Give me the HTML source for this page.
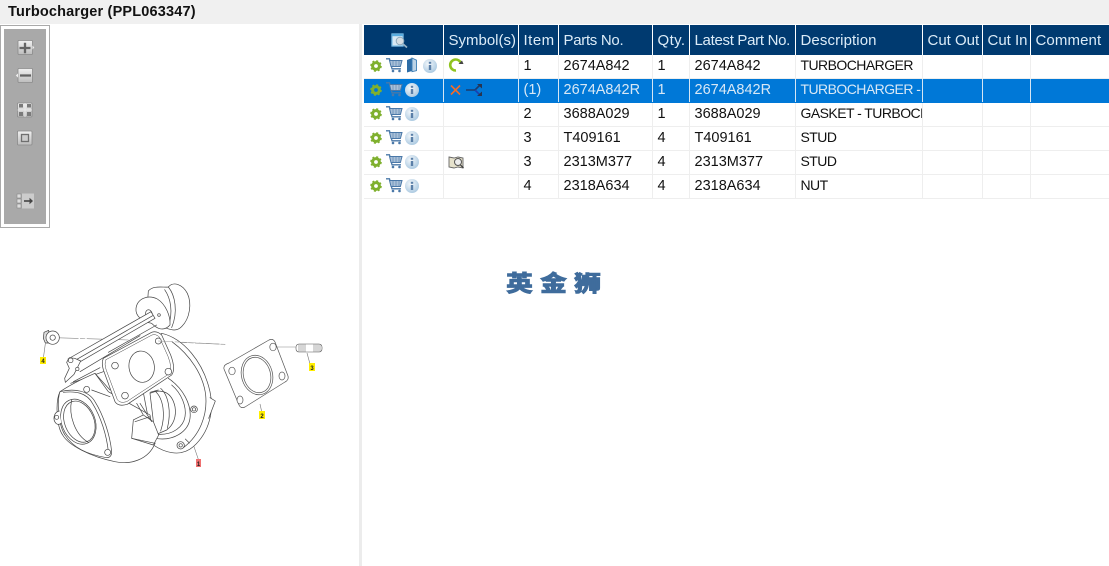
<!DOCTYPE html>
<html><head><meta charset="utf-8"><style>
html,body{margin:0;padding:0;width:1109px;height:566px;overflow:hidden;background:#fff;font-family:"Liberation Sans","Noto Sans CJK SC",sans-serif;color:#111}
#top{position:absolute;left:0;top:0;width:1109px;height:24px;background:#f0f0f0;font-weight:bold;font-size:14.5px;line-height:24px;padding-left:8px;box-sizing:border-box;letter-spacing:.18px}
#bar{position:absolute;left:0;top:25px;width:48px;height:201px;border:1px solid #aaa;background:#fff}
#bar i{position:absolute;left:3px;top:3px;width:42px;height:195px;background:#a9a9a9}
#split{position:absolute;left:359px;top:24px;width:3px;height:542px;background:#ececec}
table{position:absolute;left:364px;top:25px;border-collapse:collapse;table-layout:fixed;width:745px;font-size:14.5px}
td,th{padding:0 0 0 5px;overflow:hidden;white-space:nowrap;border-right:1px solid #eee;border-bottom:1px solid #eee;height:23px;line-height:22px;box-sizing:content-box;text-align:left;font-weight:normal;vertical-align:top}
th{background:#003a70;color:#dcecf8;height:28px;padding-top:2px;line-height:28px;font-size:15px;border-right:1px solid #fff;border-bottom:0;padding-left:5px}
tr.s td{background:#0078d7;color:#d8e8f6;border-right-color:#d5e6f4;border-bottom-color:#0078d7}
td.u{font-size:14px;letter-spacing:-.55px;line-height:20px}
#logo{position:absolute;left:506px;top:267px;font-size:27px;font-weight:900;letter-spacing:7px;line-height:34px;color:#3f6c9c;white-space:nowrap;transform:scaleY(.84);transform-origin:0 50%;-webkit-text-stroke:.7px #3f6c9c;font-family:"Liberation Sans","Noto Sans CJK SC",sans-serif}
svg{position:absolute;left:0;top:0}
.lb{font-size:6px;font-weight:bold;fill:#222;text-anchor:middle}
</style></head><body>
<div id="top">Turbocharger (PPL063347)</div>
<div id="bar"><i></i></div>
<div id="split"></div>
<table>
<colgroup><col style="width:79px"><col style="width:75px"><col style="width:40px"><col style="width:94px"><col style="width:37px"><col style="width:106px"><col style="width:127px"><col style="width:60px"><col style="width:48px"><col style="width:79px"></colgroup>
<tr><th></th><th>Symbol(s)</th><th style="letter-spacing:.5px">Item</th><th style="letter-spacing:-.3px">Parts No.</th><th style="letter-spacing:.4px">Qty.</th><th style="letter-spacing:-.3px">Latest Part No.</th><th style="letter-spacing:.1px">Description</th><th>Cut Out</th><th>Cut In</th><th style="letter-spacing:.1px">Comment</th></tr>
<tr><td></td><td></td><td>1</td><td>2674A842</td><td>1</td><td>2674A842</td><td class="u">TURBOCHARGER</td><td></td><td></td><td></td></tr>
<tr class="s"><td></td><td></td><td>(1)</td><td>2674A842R</td><td>1</td><td>2674A842R</td><td class="u">TURBOCHARGER -</td><td></td><td></td><td></td></tr>
<tr><td></td><td></td><td>2</td><td>3688A029</td><td>1</td><td>3688A029</td><td class="u">GASKET - TURBOCHARGER</td><td></td><td></td><td></td></tr>
<tr><td></td><td></td><td>3</td><td>T409161</td><td>4</td><td>T409161</td><td class="u">STUD</td><td></td><td></td><td></td></tr>
<tr><td></td><td></td><td>3</td><td>2313M377</td><td>4</td><td>2313M377</td><td class="u">STUD</td><td></td><td></td><td></td></tr>
<tr><td></td><td></td><td>4</td><td>2318A634</td><td>4</td><td>2318A634</td><td class="u">NUT</td><td></td><td></td><td></td></tr>
</table>
<div id="logo">英金狮</div>
<svg width="1109" height="566" viewBox="0 0 1109 566">
<defs>
<g id="gear"><circle r="3.400" fill="none" stroke="#7fb02e" stroke-width="3"/><circle r="5" fill="none" stroke="#7fb02e" stroke-width="1.600" stroke-dasharray="2 1.930"/></g>
<g id="cart" fill="none" stroke="#4a78a8"><path d="M0 .8h3.500l2.500 10h9" stroke-width="1.300"/><path d="M3.500 2.500h12.500l-1.600 6H5z" fill="#a9c0d8" stroke-width="1"/><path d="M7 3v5M10 3v5M13 3v5" stroke="#5f88b3" stroke-width=".7"/><circle cx="7" cy="13" r="1.300" fill="#4a78a8" stroke="none"/><circle cx="13.500" cy="13" r="1.300" fill="#4a78a8" stroke="none"/></g>
<radialGradient id="ig" cx=".4" cy=".35" r=".75"><stop offset="0" stop-color="#f4f8fb"/><stop offset="1" stop-color="#a3c4de"/></radialGradient>
<g id="info"><circle r="7" fill="url(#ig)"/><rect x="-1.200" y="-1" width="2.400" height="5" fill="#5a7fa8"/><rect x="-1.200" y="-4.200" width="2.400" height="2" fill="#5a7fa8"/></g>
<linearGradient id="btn" x1="0" y1="0" x2="0" y2="1"><stop offset="0" stop-color="#f0f0f0"/><stop offset="1" stop-color="#bdbdbd"/></linearGradient>
<filter id="soft" x="-5%" y="-5%" width="110%" height="110%"><feGaussianBlur stdDeviation=".28"/></filter>
</defs>

<!-- toolbar icons -->
<g stroke="#8a8a8a" fill="url(#btn)" stroke-width=".8">
<rect x="18" y="40.500" width="14.500" height="14" rx="1"/><rect x="18" y="68.500" width="14.500" height="14" rx="1"/><rect x="17.500" y="103" width="14.500" height="14" rx="1"/><rect x="17.500" y="131" width="14.500" height="14" rx="1"/>
</g>
<path d="M32.500 45.500l1.800 2-1.800 2zM18 73.500l-2.200 2 2.200 2z" fill="#eee"/>
<path d="M19.500 48h11M25 42.800v10.500M20 75.500h11" stroke="#636363" stroke-width="2.300" fill="none"/>
<g fill="#7a7a7a"><rect x="19" y="104" width="4" height="3.500"/><rect x="27" y="104" width="4" height="3.500"/><rect x="19" y="112" width="4" height="4"/><rect x="27" y="112" width="4" height="4"/></g>
<path d="M17.500 110h14.500M25 103v14" stroke="#eee" stroke-width=".8"/>
<rect x="21.500" y="134.500" width="7" height="7" fill="#ccc" stroke="#6f6f6f" stroke-width="1.300"/>
<g fill="#ddd" stroke="#888" stroke-width=".6"><rect x="17" y="194" width="4" height="4"/><rect x="17" y="199" width="4" height="4"/><rect x="17" y="204" width="4" height="4"/></g>
<rect x="22" y="193.500" width="12" height="15" fill="#d8d8d8" opacity=".75"/>
<path d="M24 201h6" stroke="#444" stroke-width="1.600"/><path d="M29.500 197.800l3.500 3.200-3.500 3.200z" fill="#444"/>

<!-- header search icon -->
<rect x="392" y="34" width="11" height="12" fill="#d9e8f3" stroke="#7fc0e8" stroke-width="1.300"/>
<rect x="392" y="34" width="11" height="2.200" fill="#59acdf"/>
<circle cx="400" cy="41" r="3.800" fill="#d6dde2" stroke="#8fa9bb"/>
<path d="M403 44l4 3.500" stroke="#9ab4c6" stroke-width="1.700"/>

<!-- row icons -->
<g>
<use href="#gear" x="376" y="66"/><use href="#cart" x="386" y="58"/>
<path d="M407 60l5-2v13l-5 1.500z" fill="#2d6ca6"/><path d="M412 58l4.500 2.200v10.500l-4.500 1z" fill="#bcd3e6" stroke="#3d7eb5" stroke-width=".9"/>
<use href="#info" x="430" y="66"/>
<use href="#gear" x="376" y="90"/><use href="#cart" x="386" y="82"/><use href="#info" x="412" y="90"/>
<use href="#gear" x="376" y="114"/><use href="#cart" x="386" y="106"/><use href="#info" x="412" y="114"/>
<use href="#gear" x="376" y="138"/><use href="#cart" x="386" y="130"/><use href="#info" x="412" y="138"/>
<use href="#gear" x="376" y="162"/><use href="#cart" x="386" y="154"/><use href="#info" x="412" y="162"/>
<use href="#gear" x="376" y="186"/><use href="#cart" x="386" y="178"/><use href="#info" x="412" y="186"/>
</g>
<!-- symbols -->
<path d="M456 70.500a5.500 5.500 0 1 1 5-7" fill="none" stroke="#8fc31f" stroke-width="2.600"/><path d="M458.500 64l5 0-1.500-3.500z" fill="#444"/>
<path d="M451 85.500l9 9M460 85.500l-9 9" stroke="#f26b2a" stroke-width="1.600"/>
<path d="M466 90h9l5-5" stroke="#1d3a6b" stroke-width="1.600" fill="none"/><path d="M475 90l5 5" stroke="#1a3fb0" stroke-width="1.600"/><path d="M477 84h5v4.500zM477 96h5v-4.500z" fill="#28344f"/>
<path d="M449 157l5 1 4-1 5 1v10l-5-1-4 1-5-1z" fill="#e6e2cc" stroke="#666" stroke-width=".9"/><circle cx="458" cy="162" r="3.500" fill="#eee" stroke="#555"/><path d="M460.500 165l3 3" stroke="#444" stroke-width="1.300"/>

<g filter="url(#soft)">
<!-- gasket -->
<g fill="#fff" stroke="#555" stroke-width=".7">
<path d="M229 363l40-23q4-2 6 2l13 34q1 4-3 6l-40 25q-4 2-6-2l-15-36q-1-4 5-6z"/>
<ellipse cx="257" cy="375" rx="15.500" ry="20" transform="rotate(-15 257 375)"/>
<ellipse cx="257" cy="375" rx="13.500" ry="18" transform="rotate(-15 257 375)"/>
<ellipse cx="273" cy="347" rx="3.200" ry="3.800"/><ellipse cx="232" cy="371" rx="3.200" ry="3.800"/><ellipse cx="282" cy="376" rx="3" ry="4"/><ellipse cx="240" cy="400" rx="3" ry="4"/>
</g>
<!-- stud -->
<g fill="#fff" stroke="#555" stroke-width=".6">
<rect x="296" y="344" width="26" height="8" rx="3"/>
<path d="M299 344v8M301 344v8M303 344v8M305 344v8M314 344v8M316 344v8M318 344v8M320 344v8" stroke="#777" stroke-width=".6"/>
</g>
<path d="M277 347l19 0" stroke="#888" stroke-width=".6"/>
<path d="M307 353l3 11M260 404l2 9" stroke="#777" stroke-width=".6" fill="none"/>

<!-- turbo traced in zoom coordinates -->
<g transform="translate(40 275) scale(.33333)" fill="#fff" stroke="#444" stroke-width="2.100" stroke-linejoin="round" stroke-linecap="round">
<path d="M45 188L265 195M370 200L555 208" stroke="#888" stroke-width="1.800" stroke-dasharray="70 6 14 6" fill="none"/>
<path d="M12 172l14-6 4 38-14 0-6-14z" fill="#ddd"/><circle cx="38" cy="188" r="20"/><circle cx="38" cy="188" r="8"/>
<path d="M16 206L10 250" stroke="#777" stroke-width="1.800" fill="none"/>
<path d="M365 175C430 190 490 260 510 350C522 405 510 470 460 515C420 550 370 530 340 510L300 300z"/>
<path d="M510 368l16 10-20 52" />
<path d="M396 200C450 240 490 300 497 360C503 420 480 480 430 518" fill="none"/>
<path d="M385 310C430 340 455 390 450 430C445 470 400 500 345 490" fill="none"/>
<path d="M395 330C425 355 440 395 435 425C430 455 400 480 355 478" fill="none"/>
<path d="M330 355C365 340 395 350 405 395C410 425 400 450 380 465L345 480z"/>
<path d="M345 348C370 370 378 420 362 468M362 340C385 360 395 410 382 460M330 352L355 345" fill="none"/>
<circle cx="462" cy="403" r="10"/><circle cx="462" cy="403" r="5"/>
<circle cx="422" cy="511" r="11"/><circle cx="422" cy="511" r="5"/>
<path d="M436 492l12 12" fill="none"/>
<path d="M325 48C340 30 370 38 385 36C400 18 428 28 442 55C456 85 450 130 425 155C410 170 395 165 380 160L320 120z"/>
<path d="M385 36C405 60 415 110 395 158M374 44C392 70 400 110 385 155" fill="none"/>
<path d="M288 100C292 70 325 58 352 72C378 88 392 125 390 150C370 172 350 160 335 145C310 140 285 125 288 100z"/>
<ellipse cx="327" cy="118" rx="10" ry="14" transform="rotate(-15 327 118)"/>
<circle cx="357" cy="120" r="4"/>
<path d="M84 252L333 110L345 130L100 272z"/>
<path d="M95 262L338 122M120 290L300 182M205 232L350 150" fill="none"/>
<path d="M80 262l8-14 16 2 18 8-20 40-26 24-2-12 14-30z"/>
<circle cx="92" cy="256" r="7"/><circle cx="112" cy="282" r="5"/>
<path d="M100 320L180 278M92 325L190 290" fill="none"/>
<path d="M165 295L205 350L330 420L345 505C325 555 270 570 225 560C150 545 85 510 68 480C50 455 45 380 60 350C90 330 130 310 165 295z"/>
<path d="M155 345L210 365M165 295L210 345" fill="none"/>
<path d="M290 385L310 420L280 435L275 490L340 510L356 480L340 440L310 420" />
<path d="M285 440L330 425M300 385L335 440M275 490L345 505" fill="none"/>
<path d="M60 350C100 340 145 345 165 380C190 420 210 480 215 530Q215 548 200 548C150 540 100 520 75 480C55 450 50 380 60 350z"/>
<path d="M70 352C105 348 140 352 158 386C182 425 200 480 205 530" fill="none"/>
<ellipse cx="115" cy="440" rx="50" ry="70" transform="rotate(-22 115 440)"/>
<ellipse cx="118" cy="440" rx="44" ry="64" transform="rotate(-22 118 440)"/>
<path d="M95 375C85 420 105 480 145 502" fill="none"/>
<circle cx="140" cy="343" r="9"/><circle cx="203" cy="532" r="9"/>
<path d="M58 408C40 412 38 435 48 445C54 450 60 448 64 444" />
<circle cx="50" cy="427" r="6"/>
<path d="M190 250L335 172Q350 166 365 180L392 240Q408 282 395 300L262 388Q235 396 225 380L192 290Q183 265 190 250z"/>
<path d="M198 254L336 180Q348 176 358 186L384 244Q398 280 388 296L260 380Q240 386 232 374L199 286Q192 266 198 254z" fill="none" stroke-width="1.500"/>
<ellipse cx="305" cy="275" rx="38" ry="47" transform="rotate(-8 305 275)"/>
<circle cx="355" cy="198" r="9"/><circle cx="225" cy="272" r="10"/><circle cx="385" cy="290" r="10"/><circle cx="255" cy="362" r="10"/>
<path d="M355 198L555 208" stroke="#999" stroke-width="1.600" stroke-dasharray="40 10 14 8" fill="none"/>
<path d="M462 515L475 553" stroke="#777" stroke-width="1.800" fill="none"/>
</g>
</g>

<!-- labels -->
<rect x="40" y="357" width="6" height="7" fill="#ffee00"/><text x="43" y="363" class="lb">4</text>
<rect x="309" y="363" width="6" height="8" fill="#ffee00"/><text x="312" y="370" class="lb">3</text>
<rect x="259" y="411" width="6" height="8" fill="#ffee00"/><text x="262" y="418" class="lb">2</text>
<rect x="196" y="459" width="5" height="8" fill="#f07070"/><text x="198.500" y="466" class="lb">1</text>
</svg>
</body></html>
